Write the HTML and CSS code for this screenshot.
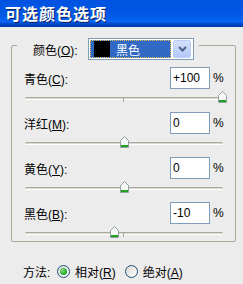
FILE: index.html
```html
<html lang="zh">
	<head>
		<meta charset="UTF-8" />
		<title>可选颜色选项</title>
		<link rel="stylesheet" href="styles.css">
	</head>

	<body>
		<div class="titlebar">可选颜色选项</div>

		<div class="panel">
			<div class="group">
				<div class="group-head">
					<span class="head-label">颜色(<u>O</u>):</span>
					<div class="combo">
						<div class="combo-value">
							<span class="swatch"></span>
							<span>黑色</span>
						</div>
						<div class="combo-button">
							<svg width="9" height="6" viewBox="0 0 9 6"><path d="M1 1 L4.5 4.5 L8 1" fill="none" stroke="#4d6185" stroke-width="2"/></svg>
						</div>
					</div>
				</div>

				<div class="row">
					<span class="label">青色(<u>C</u>):</span>
					<div class="field">+100</div>
					<span class="pct">%</span>
				</div>
				<div class="slider">
					<div class="track"><span class="tick"></span></div>
					<svg class="thumb" style="left: 193px" width="9" height="12" viewBox="0 0 9 12"><path d="M0.5 4.5 L4.5 0.5 L8.5 4.5 L8.5 11.5 L0.5 11.5 Z" fill="#f7f7f3" stroke="#8fa1a5"/><rect x="1" y="9" width="7" height="2" fill="#21a121"/></svg>
				</div>

				<div class="row">
					<span class="label">洋红(<u>M</u>):</span>
					<div class="field">0</div>
					<span class="pct">%</span>
				</div>
				<div class="slider">
					<div class="track"><span class="tick"></span></div>
					<svg class="thumb" style="left: 95px" width="9" height="12" viewBox="0 0 9 12"><path d="M0.5 4.5 L4.5 0.5 L8.5 4.5 L8.5 11.5 L0.5 11.5 Z" fill="#f7f7f3" stroke="#8fa1a5"/><rect x="1" y="9" width="7" height="2" fill="#21a121"/></svg>
				</div>

				<div class="row">
					<span class="label">黄色(<u>Y</u>):</span>
					<div class="field">0</div>
					<span class="pct">%</span>
				</div>
				<div class="slider">
					<div class="track"><span class="tick"></span></div>
					<svg class="thumb" style="left: 95px" width="9" height="12" viewBox="0 0 9 12"><path d="M0.5 4.5 L4.5 0.5 L8.5 4.5 L8.5 11.5 L0.5 11.5 Z" fill="#f7f7f3" stroke="#8fa1a5"/><rect x="1" y="9" width="7" height="2" fill="#21a121"/></svg>
				</div>

				<div class="row">
					<span class="label">黑色(<u>B</u>):</span>
					<div class="field">-10</div>
					<span class="pct">%</span>
				</div>
				<div class="slider">
					<div class="track"><span class="tick"></span></div>
					<svg class="thumb" style="left: 85px" width="9" height="12" viewBox="0 0 9 12"><path d="M0.5 4.5 L4.5 0.5 L8.5 4.5 L8.5 11.5 L0.5 11.5 Z" fill="#f7f7f3" stroke="#8fa1a5"/><rect x="1" y="9" width="7" height="2" fill="#21a121"/></svg>
				</div>
			</div>

			<div class="method">
				<span class="method-label">方法:</span>
				<span class="radio checked"></span>
				<span class="radio-text">相对(<u>R</u>)</span>
				<span class="radio"></span>
				<span class="radio-text">绝对(<u>A</u>)</span>
			</div>
		</div>
	</body>
</html>
```

FILE: styles.css
```css
body {
	margin: 0;
	background: #ececec;
	font-family: 'Liberation Sans', 'Noto Sans CJK SC', sans-serif;
	font-size: 12px;
	color: #000;
}

u {
	text-decoration: underline;
	text-underline-offset: 1px;
}

.titlebar {
	height: 27px;
	box-sizing: border-box;
	padding: 2px 0 0 5px;
	background: linear-gradient(to bottom, #0053e0 0%, #0058e6 55%, #0a66f6 80%, #0048c8 88%, #003ca8 100%);
	color: #fff;
	font-family: 'Noto Sans CJK SC', sans-serif;
	font-size: 16px;
	font-weight: bold;
	letter-spacing: 1px;
	line-height: 22px;
	text-shadow: 1px 1px 0 #0a1f60;
}

.panel {
	padding: 0 7px 0 11px;
}

.group {
	margin-top: 18px;
	border: 1px solid #aca899;
	border-radius: 2px;
	padding-bottom: 3px;
}

.group-head {
	display: inline-flex;
	align-items: center;
	height: 22px;
	margin: -8px 0 0 5px;
	padding: 0 5px 0 16px;
	background: #ececec;
}

.head-label {
	width: 55px;
}

.combo {
	display: flex;
	align-items: center;
	width: 106px;
	height: 22px;
	box-sizing: border-box;
	border: 1px solid #7f9db9;
	background: #fff;
	padding: 0 1px;
}

.combo-value {
	display: flex;
	align-items: center;
	width: 81px;
	height: 18px;
	box-sizing: border-box;
	border: 1px dotted #e8c060;
	background: #316ac5;
	color: #fff;
	padding-left: 3px;
}

.swatch {
	width: 16px;
	height: 16px;
	background: #000;
	margin-right: 6px;
}

.combo-button {
	display: flex;
	align-items: center;
	justify-content: center;
	width: 18px;
	height: 18px;
	margin-left: 2px;
	box-sizing: border-box;
	border: 1px solid #b9cdf8;
	border-radius: 2px;
	background: linear-gradient(to bottom, #d4e0fc, #b4c8f8);
}

.row {
	display: flex;
	align-items: center;
	height: 22px;
	margin-top: 7px;
	padding: 0 10px 0 12px;
}

.slider + .row {
	margin-top: 9px;
}

.label {
	flex: 1;
}

.field {
	width: 40px;
	height: 22px;
	box-sizing: border-box;
	border: 1px solid #7f9db9;
	background: #fff;
	padding-left: 2px;
	line-height: 20px;
}

.pct {
	width: 12px;
	margin-left: 3px;
}

.slider {
	position: relative;
	height: 12px;
	margin: 2px 0 0 13px;
	width: 198px;
}

.track {
	position: relative;
	top: 6px;
	height: 1px;
	border-top: 1px solid #a9a9a0;
	border-bottom: 1px solid #fff;
	background: #d8d8d0;
	border-radius: 2px;
}

.tick {
	position: absolute;
	left: 98px;
	top: 0;
	width: 1px;
	height: 4px;
	background: #a9a9a0;
}

.thumb {
	position: absolute;
	top: 0;
}

.method {
	display: flex;
	align-items: center;
	height: 16px;
	margin-top: 21px;
	padding-left: 12px;
}

.method-label {
	width: 34px;
}

.radio {
	width: 13px;
	height: 13px;
	box-sizing: border-box;
	border: 1px solid #1c5180;
	border-radius: 50%;
	background: linear-gradient(135deg, #dcd9d0, #ffffff);
	display: flex;
	align-items: center;
	justify-content: center;
}

.radio.checked::after {
	content: '';
	width: 7px;
	height: 7px;
	border-radius: 50%;
	background: radial-gradient(circle at 35% 35%, #80e080, #21a121 70%);
}

.radio-text {
	margin: 0 9px 0 5px;
}
```
